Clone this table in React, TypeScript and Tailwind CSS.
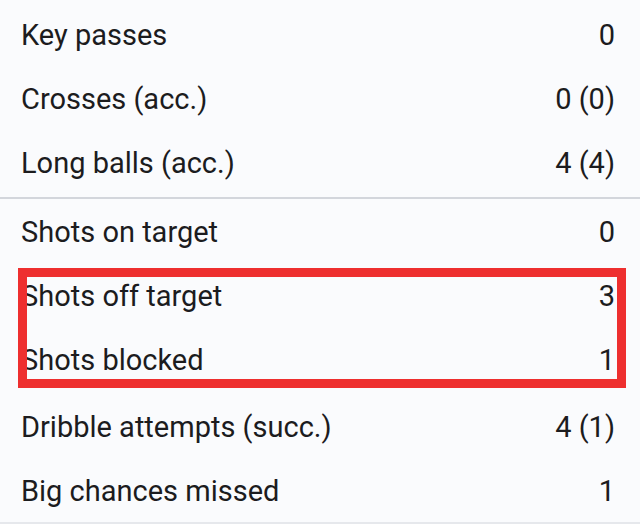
const ROWS_A: [string, string][] = [
  ["Key passes", "0"],
  ["Crosses (acc.)", "0 (0)"],
  ["Long balls (acc.)", "4 (4)"],
];

const ROWS_B: [string, string][] = [
  ["Shots on target", "0"],
  ["Shots off target", "3"],
  ["Shots blocked", "1"],
];

const ROWS_C: [string, string][] = [
  ["Dribble attempts (succ.)", "4 (1)"],
  ["Big chances missed", "1"],
];

function Row({ label, value }: { label: string; value: string }) {
  return (
    <div className="flex h-16 items-center justify-between pl-[21px] pr-[25px]">
      <span>{label}</span>
      <span>{value}</span>
    </div>
  );
}

export default function App() {
  return (
    <div
      className="relative h-[524px] w-[640px] overflow-hidden bg-[#fafbfd] text-[29px] text-[#1c1c1e]"
      style={{ fontFamily: "Roboto, 'Liberation Sans', sans-serif" }}
    >
      <div className="pt-[4px]">
        {ROWS_A.map(([l, v]) => (
          <Row key={l} label={l} value={v} />
        ))}
      </div>
      <div className="mt-[1px] h-[2px] bg-[#d3d6dc]" />
      <div className="pt-[2px]">
        {ROWS_B.map(([l, v]) => (
          <Row key={l} label={l} value={v} />
        ))}
      </div>
      <div className="pt-[3px]">
        {ROWS_C.map(([l, v]) => (
          <Row key={l} label={l} value={v} />
        ))}
      </div>
      <div className="absolute bottom-0 left-0 h-[2px] w-full bg-[#e6e8ec]" />

      {/* highlight box over the two shot rows */}
      <div className="absolute left-[18px] top-[268px] h-[120px] w-[608px] border-[9px] border-[#ee2f2f]" />
    </div>
  );
}
